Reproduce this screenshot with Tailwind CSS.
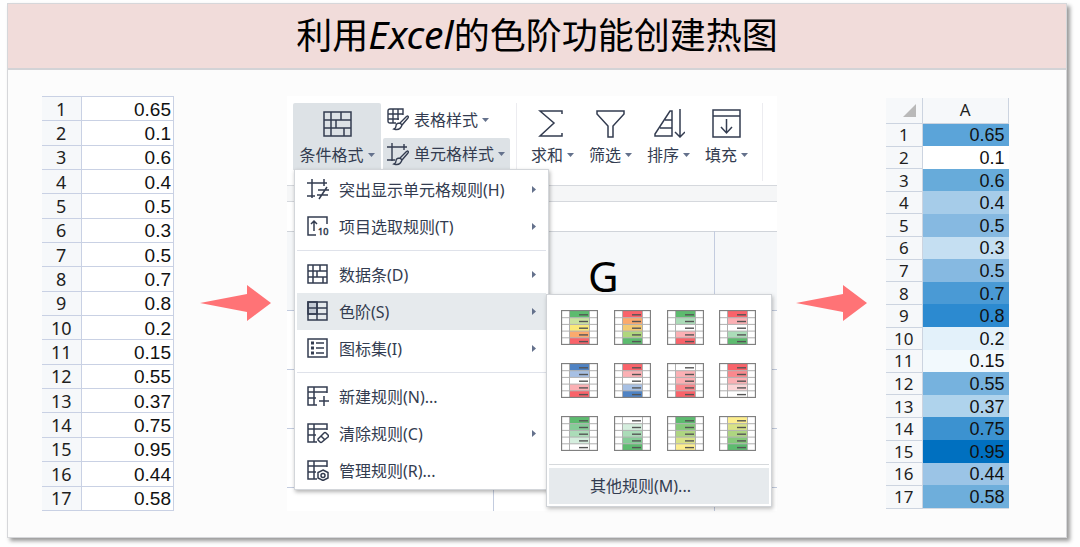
<!DOCTYPE html>
<html lang="zh-CN">
<head>
    <meta charset="UTF-8">
    <meta name="viewport" content="width=device-width, initial-scale=1.0">
    <title>利用Excel的色阶功能创建热图</title>
    <!-- Tailwind CSS -->
    <script src="https://cdn.jsdelivr.net/npm/@tailwindcss/browser@4"></script>
</head>
<body class="bg-[#fefefe] pt-[3px] pr-[13px] pb-[8px] pl-[7px] font-['Noto_Sans','Noto_Sans_CJK_SC',sans-serif] text-[#333c50]">
    <!-- Card -->
    <div class="border border-[#d6d7da] bg-[#fcfcfc] shadow-[3px_3px_4px_rgba(0,0,0,0.4)]">
        <!-- Header -->
        <header class="flex h-[66px] items-center justify-center border-b-2 border-[#d3d3d6] bg-[#f1dcda]">
            <h1 class="pb-[4px] text-[36px] leading-none whitespace-nowrap text-black">利用<span class="text-[39px] leading-none italic">Excel</span>的色阶功能创建热图</h1>
        </header>

        <!-- Main Content -->
        <main class="flex items-start pt-[26px] pr-[57px] pb-[26px] pl-[34px]">
            <!-- Source data -->
            <table class="h-[415px] w-[132px] shrink-0 table-fixed border-collapse border-y border-[#c9d1e4]">
                <colgroup>
                    <col class="w-[39px]">
                    <col>
                </colgroup>
                <tbody id="source-rows"></tbody>
            </table>

            <svg class="mt-[189px] mr-[16px] ml-[26px] h-[36px] w-[71px] shrink-0" viewBox="0 0 71 36" fill="#ff7376">
                <path d="M0 18L47 9V0L71 18L47 36V27Z" />
            </svg>

            <!-- Spreadsheet window -->
            <section class="relative min-w-0 flex-1 bg-white">
                <!-- Ribbon -->
                <div class="flex h-[89px] items-start pt-[7px] pl-[6px] text-[16px] leading-[20px] whitespace-nowrap">
                    <button class="flex h-[67px] w-[88px] shrink-0 flex-col items-center justify-between rounded-t-[2px] bg-[#dde2e6] pt-[8px] pb-[5px]">
                        <svg class="h-[26px] w-[29px]" viewBox="0 0 29 26" fill="none" stroke="#333c50" stroke-width="1.5">
                            <path d="M1 1H28V25H1ZM1 9H28M1 17H28M8 1V9M18 1V9M8 9V17M13 9V17M8 17V25M21 17V25" />
                        </svg>
                        <span class="flex items-center gap-[4px]">条件格式<svg class="h-[4px] w-[7px]" viewBox="0 0 7 4" fill="#64718c"><path d="M0 0H7L3.5 4Z" /></svg></span>
                    </button>
                    <div class="ml-[2px] flex shrink-0 flex-col">
                        <button class="flex h-[35px] items-center gap-[4px] px-[4px] pb-[2px]">
                            <svg class="mr-[1px] h-[23px] w-[22px]" viewBox="0 0 22 23" fill="none" stroke="#333c50" stroke-width="1.4">
                                <path d="M7 15H3Q1 15 1 13V3Q1 1 3 1H16V7M1 6H16M1 11H12M6 1V15M11 1V12M7 15H9" />
                                <path d="M20 8L13 15M21 10L15 17M20 8Q22 8 21 10M13 15Q9 15 9 18Q9 20 7 21Q13 23 15 17Z" />
                            </svg>
                            表格样式
                            <svg class="h-[4px] w-[7px]" viewBox="0 0 7 4" fill="#64718c"><path d="M0 0H7L3.5 4Z" /></svg>
                        </button>
                        <button class="flex h-[32px] w-[127px] items-center gap-[4px] rounded-t-[2px] bg-[#dde2e6] px-[4px]">
                            <svg class="mr-[1px] h-[23px] w-[22px]" viewBox="0 0 22 23" fill="none" stroke="#333c50" stroke-width="1.4">
                                <path d="M0 4H20M5 0V18M0 17H8M17 1V7" />
                                <path d="M20 8L13 15M21 10L15 17M20 8Q22 8 21 10M13 15Q9 15 9 18Q9 20 7 21Q13 23 15 17Z" />
                            </svg>
                            单元格样式
                            <svg class="h-[4px] w-[7px]" viewBox="0 0 7 4" fill="#64718c"><path d="M0 0H7L3.5 4Z" /></svg>
                        </button>
                    </div>
                    <div class="ml-[6px] flex h-[78px] shrink-0 gap-[15px] border-x border-[#ececf0] px-[14px]">
                        <button class="flex h-[62px] flex-col justify-between">
                            <svg class="mt-[6px] ml-[7px] h-[29px] w-[29px]" viewBox="0 0 29 29" fill="none" stroke="#333c50" stroke-width="1.5">
                                <path d="M24 5V2H2L16 14L2 27H24V24" />
                            </svg>
                            <span class="flex items-center gap-[4px]">求和<svg class="h-[4px] w-[7px]" viewBox="0 0 7 4" fill="#64718c"><path d="M0 0H7L3.5 4Z" /></svg></span>
                        </button>
                        <button class="flex h-[62px] flex-col justify-between">
                            <svg class="mt-[6px] ml-[7px] h-[29px] w-[29px]" viewBox="0 0 29 29" fill="none" stroke="#333c50" stroke-width="1.5">
                                <path d="M1 2H28V5L17 17V28H12V17L1 5Z" />
                            </svg>
                            <span class="flex items-center gap-[4px]">筛选<svg class="h-[4px] w-[7px]" viewBox="0 0 7 4" fill="#64718c"><path d="M0 0H7L3.5 4Z" /></svg></span>
                        </button>
                        <button class="flex h-[62px] flex-col justify-between">
                            <svg class="mt-[6px] ml-[7px] h-[29px] w-[31px]" viewBox="0 0 31 29" fill="none" stroke="#333c50" stroke-width="1.5">
                                <path d="M18 2V27H1V25L16 2ZM11 11H18M6 19H18M26 0V27M21 23L26 28L31 23" />
                            </svg>
                            <span class="flex items-center gap-[4px]">排序<svg class="h-[4px] w-[7px]" viewBox="0 0 7 4" fill="#64718c"><path d="M0 0H7L3.5 4Z" /></svg></span>
                        </button>
                        <button class="flex h-[62px] flex-col justify-between">
                            <svg class="mt-[6px] ml-[7px] h-[29px] w-[29px]" viewBox="0 0 29 29" fill="none" stroke="#333c50" stroke-width="1.5">
                                <path d="M1 1H28V28H1ZM1 7H28M14.500 10V23M9 18L14.500 24L20 18" />
                            </svg>
                            <span class="flex items-center gap-[4px]">填充<svg class="h-[4px] w-[7px]" viewBox="0 0 7 4" fill="#64718c"><path d="M0 0H7L3.5 4Z" /></svg></span>
                        </button>
                    </div>
                </div>
                <div class="h-[17px] border-y border-[#d5d8dd] bg-[#f5f6f7]"></div>
                <div class="h-[29px]"></div>

                <!-- Sheet behind the menus -->
                <table class="w-full table-fixed border-collapse border-t border-[#d0d4da]">
                    <colgroup>
                        <col class="w-[206px]">
                        <col class="w-[221px]">
                        <col>
                    </colgroup>
                    <thead>
                        <tr class="h-[79px] border-b border-[#c3ccdf] bg-[#f5f7f9]">
                            <th></th>
                            <th class="border-r border-[#c3ccdf] pt-[10px] text-[42px] leading-none font-normal text-black">G</th>
                            <th></th>
                        </tr>
                    </thead>
                    <tbody>
                        <tr class="h-[59px] border-b border-[#c3ccdf]"><td class="border-r border-[#c3ccdf]"></td><td class="border-r border-[#c3ccdf]"></td><td></td></tr>
                        <tr class="h-[59px] border-b border-[#c3ccdf]"><td class="border-r border-[#c3ccdf]"></td><td class="border-r border-[#c3ccdf]"></td><td></td></tr>
                        <tr class="h-[59px] border-b border-[#c3ccdf]"><td class="border-r border-[#c3ccdf]"></td><td class="border-r border-[#c3ccdf]"></td><td></td></tr>
                        <tr class="h-[23px]"><td class="border-r border-[#c3ccdf]"></td><td class="border-r border-[#c3ccdf]"></td><td></td></tr>
                    </tbody>
                </table>

                <!-- Conditional formatting menu -->
                <div id="format-menu" class="absolute top-[73px] left-[7px] w-[255px] border border-[#d3d6da] bg-white px-[2px] pt-[1px] text-[16px] shadow-[1px_2px_4px_rgba(0,0,0,0.3)]"></div>

                <!-- Color scale submenu -->
                <div class="absolute top-[198px] left-[259px] w-[226px] border border-[#d0d3d7] bg-white px-[2px] pb-[2px] text-[16px] shadow-[1px_2px_4px_rgba(0,0,0,0.25)]">
                    <div id="scale-list" class="grid grid-cols-4 gap-x-[15px] gap-y-[18px] px-[12px] pt-[15px] pb-[13px]"></div>
                    <div class="mb-[3px] border-t border-[#d6d9dc]"></div>
                    <button class="flex h-[36px] w-full items-center bg-[#e6eaed] pl-[41px]">其他规则(M)...</button>
                </div>
            </section>

            <svg class="mt-[189px] mr-[19px] ml-[19px] h-[36px] w-[71px] shrink-0" viewBox="0 0 71 36" fill="#ff7376">
                <path d="M0 18L47 9V0L71 18L47 36V27Z" />
            </svg>

            <!-- Heat map -->
            <table class="mt-[2px] h-[411px] w-[123px] shrink-0 table-fixed border-collapse border-b border-[#d5dae2]">
                <colgroup>
                    <col class="w-[36px]">
                    <col>
                </colgroup>
                <thead>
                    <tr class="h-[25px] border-b border-[#ccd4e0] bg-[#f6f8fa] text-[17px] leading-[20px] text-[#1f1f1f]">
                        <th class="p-0 pr-[6px]">
                            <svg class="ml-auto h-[13px] w-[13px]" viewBox="0 0 13 13" fill="#b9b9b9"><path d="M13 0V13H0Z" /></svg>
                        </th>
                        <th class="border-x border-[#ccd4e0] p-0 font-normal">A</th>
                    </tr>
                </thead>
                <tbody id="heat-rows"></tbody>
            </table>
        </main>
    </div>

    <script>
        // Values with the fill of each heat map cell
        const ROWS = [
            ['0.65', '#5ba4d9'], ['0.1', '#ffffff'], ['0.6', '#67abda'], ['0.4', '#a6cce9'],
            ['0.5', '#86b9e1'], ['0.3', '#c5dff2'], ['0.5', '#86b9e1'], ['0.7', '#4a9ad5'],
            ['0.8', '#2c8ad0'], ['0.2', '#e3f1fa'], ['0.15', '#f2f9fd'], ['0.55', '#76b2de'],
            ['0.37', '#afd3ec'], ['0.75', '#3c92d0'], ['0.95', '#0070c0'], ['0.44', '#9bc4e6'],
            ['0.58', '#6eaedb']
        ];

        const GRID = '<path d="M8 19H1V1H20V7M1 6H20M1 12H9M7 1V19M7 19H10" />';

        // Menu entries, null is a separator
        const MENU = [
            { label: '突出显示单元格规则(H)', more: true, icon: '<path d="M0 4H20M5 0V19M17 0V7M0 17H8M11 11H22M10 16H21M20 8L12 20" />' },
            { label: '项目选取规则(T)', more: true, icon: '<path d="M9 19H1V1H20V8M7 15V5M4 8L7 5L10 8" /><text x="11" y="19" font-size="9" fill="#333c50" stroke-width="0.5">10</text>' },
            null,
            { label: '数据条(D)', more: true, icon: '<path d="M1 1H20V19H1ZM1 7H20M1 13H20M6 1V19M13 1V7M10 7V13M16 13V19" />' },
            { label: '色阶(S)', more: true, active: true, icon: '<path d="M1 1H10V13H1Z" fill="#c3cad4" /><path d="M1 1H20V19H1ZM1 7H20M1 13H20M10 1V19" />' },
            { label: '图标集(I)', more: true, icon: '<path d="M1 1H20V19H1ZM9 5H17M9 10H17M9 15H17" /><path d="M4 5H7M4 10H7M4 15H7" stroke-width="3" />' },
            null,
            { label: '新建规则(N)...', icon: GRID + '<path d="M17 10V20M12 15H22" />' },
            { label: '清除规则(C)', more: true, icon: GRID + '<path d="M11 16L17 10Q18 9 19 10L21 12Q22 13 21 14L15 19Q14 20 13 19L11 17ZM14 13L18 17" />' },
            { label: '管理规则(R)...', icon: GRID + '<path d="M16 10L21 12.500V18L16 20.500L11 18V12.500Z" /><circle cx="16" cy="15.500" r="2" />' }
        ];

        const SCALES = [
            ['#5dbb6f', '#cbe3a0', '#fbe97a', '#fbaa6d', '#f9636a'],
            ['#f9636a', '#fbaa6d', '#f2ca73', '#b0d67d', '#5dbb6f'],
            ['#5dbb6f', '#abdcb8', '#ffffff', '#fbb0b4', '#f9636a'],
            ['#f9636a', '#fbb0b4', '#ffffff', '#abdcb8', '#5dbb6f'],
            ['#4f83c4', '#a7c0e4', '#ffffff', '#fbb0b4', '#f9636a'],
            ['#f9636a', '#fbb0b4', '#ffffff', '#a7c0e4', '#4f83c4'],
            ['#ffffff', '#fbb0b4', '#fbb0b4', '#fa888d', '#f9636a'],
            ['#f9636a', '#fa888d', '#fbb0b4', '#fcd5d7', '#ffffff'],
            ['#5dbb6f', '#85cc97', '#abdcb8', '#d5eede', '#ffffff'],
            ['#ffffff', '#d5eede', '#abdcb8', '#85cc97', '#5dbb6f'],
            ['#5dbb6f', '#85c97a', '#aed581', '#d8e287', '#fdee8e'],
            ['#fdee8e', '#d8e287', '#aed581', '#85c97a', '#5dbb6f']
        ];

        document.getElementById('source-rows').innerHTML = ROWS.map(([value], i) => `
            <tr class="border-b border-[#c9d1e4] leading-[20px]">
                <th class="bg-[#f6f8fa] p-0 text-[18px] font-normal text-[#1f1f1f]">${i + 1}</th>
                <td class="border-x border-[#c9d1e4] bg-white p-0 pt-[2px] pr-[2px] text-right font-['Liberation_Sans',sans-serif] text-[19px] text-[#111]">${value}</td>
            </tr>
        `).join('');

        document.getElementById('heat-rows').innerHTML = ROWS.map(([value, color], i) => `
            <tr class="leading-[19px]">
                <th class="border-b border-[#ccd4e0] bg-[#f6f8fa] p-0 text-[17px] font-normal text-[#1f1f1f]">${i + 1}</th>
                <td class="border-l border-[#ccd4e0] p-0 pt-[2px] pr-[4px] text-right font-['Liberation_Sans',sans-serif] text-[18px] text-[#111]" style="background: ${color}">${value}</td>
            </tr>
        `).join('');

        document.getElementById('format-menu').innerHTML = MENU.map(item => item ? `
            <button class="flex h-[37px] w-full items-center px-[10px] whitespace-nowrap ${item.active ? 'bg-[#e6eaed]' : ''}">
                <svg class="h-[21px] w-[22px]" viewBox="0 0 22 21" fill="none" stroke="#333c50" stroke-width="1.5">${item.icon}</svg>
                <span class="ml-[10px]">${item.label}</span>
                ${item.more ? '<svg class="ml-auto h-[7px] w-[4px]" viewBox="0 0 4 7" fill="#64718c"><path d="M0 0L4 3.500L0 7Z" /></svg>' : ''}
            </button>
        ` : '<div class="my-[5px] border-t border-[#dfe2ea]"></div>').join('');

        document.getElementById('scale-list').innerHTML = SCALES.map(colors => `
            <button class="h-[35px] w-[37px]">
                <svg class="h-[35px] w-[37px]" viewBox="0 0 37 35">
                    <rect width="37" height="35" fill="#fff" />
                    ${colors.map((color, i) => `
                        <rect x="9" y="${i * 6.7 + 1}" width="19" height="6.700" fill="${color}" />
                        <path d="M18 ${i * 6.7 + 4.8}H27" stroke="#555" stroke-width="1.4" />
                    `).join('')}
                    <path d="M1 7.700H36M1 14.400H36M1 21.100H36M1 27.800H36M8.500 1V34M28.500 1V34" stroke="#b0b0b0" />
                    <rect x="0.500" y="0.500" width="36" height="34" fill="none" stroke="#808080" stroke-width="1.300" />
                </svg>
            </button>
        `).join('');
    </script>
</body>
</html>
